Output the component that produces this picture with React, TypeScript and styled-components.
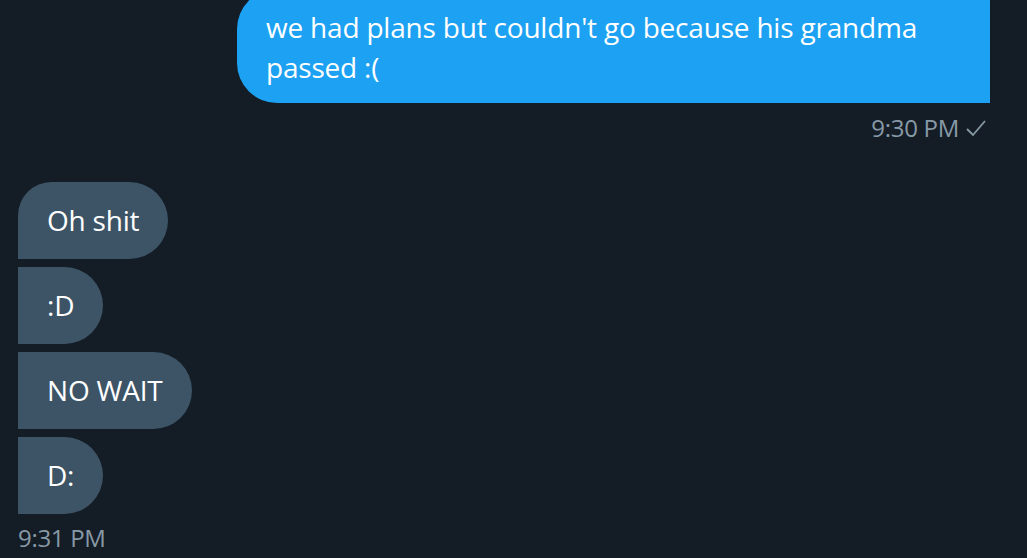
import React from "react";
import styled, { createGlobalStyle } from "styled-components";

const Global = createGlobalStyle`
  html, body { margin: 0; padding: 0; background: #141d26; }
  body { font-family: "Open Sans", "Noto Sans", sans-serif; overflow: hidden; }
`;

const Page = styled.div`
  width: 1027px;
  height: 558px;
  background: #141d26;
  box-sizing: border-box;
  padding: 0 37px 0 18px;
  display: flex;
  flex-direction: column;
  overflow: hidden;
`;

const SentGroup = styled.div`
  display: flex;
  flex-direction: column;
  align-items: flex-end;
  margin-top: -11px;
`;

const ReceivedGroup = styled.div`
  display: flex;
  flex-direction: column;
  align-items: flex-start;
  gap: 8px;
  margin-top: 38px;
`;

const Bubble = styled.div<{ $sent?: boolean; $first?: boolean; $last?: boolean }>`
  box-sizing: border-box;
  font-size: 28px;
  line-height: 40px;
  color: #ffffff;
  letter-spacing: -0.2px;
  padding: ${(p) => (p.$sent ? "18px 60px 16px 29px" : "18px 29px 19px 29px")};
  background: ${(p) => (p.$sent ? "#1da1f2" : "#3d5466")};
  width: ${(p) => (p.$sent ? "753px" : "auto")};
  border-radius: ${(p) =>
    p.$sent
      ? "40px 0 0 40px"
      : `${p.$first ? "34px" : "0"} 39px 39px 0`};
`;

const Meta = styled.div<{ $right?: boolean }>`
  display: flex;
  align-items: center;
  gap: 6px;
  font-size: 24px;
  letter-spacing: -0.3px;
  color: #8899a6;
  margin-top: ${(p) => (p.$right ? "8px" : "7px")};
  margin-right: ${(p) => (p.$right ? "3px" : "0")};
`;

const Check = () => (
  <svg width="22" height="20" viewBox="0 0 22 20">
    <polyline points="2,11 8,17 20,3" fill="none" stroke="#8899a6" strokeWidth="1.8" />
  </svg>
);

export default function App() {
  return (
    <>
      <Global />
      <Page>
        <SentGroup>
          <Bubble $sent>
            we had plans but couldn't go because his grandma
            <br />
            passed :(
          </Bubble>
          <Meta $right>
            9:30 PM
            <Check />
          </Meta>
        </SentGroup>
        <ReceivedGroup>
          <Bubble $first>Oh shit</Bubble>
          <Bubble>:D</Bubble>
          <Bubble>NO WAIT</Bubble>
          <Bubble $last>D:</Bubble>
        </ReceivedGroup>
        <Meta>9:31 PM</Meta>
      </Page>
    </>
  );
}
